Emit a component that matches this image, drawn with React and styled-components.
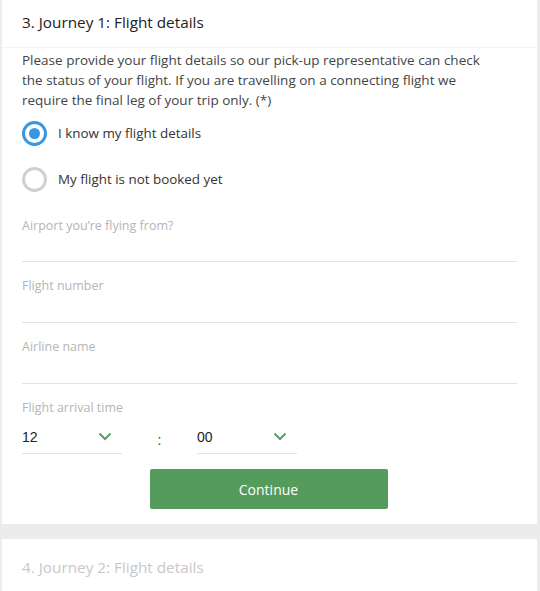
import React from 'react'
import styled, { createGlobalStyle } from 'styled-components'

const GlobalStyle = createGlobalStyle`
  html, body {
    margin: 0;
    padding: 0;
    background: #ececec;
    font-family: "Open Sans", "Liberation Sans", sans-serif;
  }
`

const Page = styled.div`
  display: flex;
  flex-direction: column;
  gap: 15px;
  padding: 0 3px 0 2px;
`

const Card = styled.section`
  background: #fff;
`

const CardHeader = styled.div`
  height: ${props => props.open ? '48px' : '53px'};
  box-sizing: border-box;
  padding: ${props => props.open ? '0 20px 3px' : '3px 20px 0'};
  display: flex;
  align-items: center;
  border-bottom: ${props => props.open ? '1px solid #f3f3f3' : 'none'};
  font-size: 15.3px;
  color: ${props => props.open ? '#222' : '#c8c8c8'};
`

const CardBody = styled.div`
  padding: 2px 20px 15px;
  display: flex;
  flex-direction: column;
`

const Intro = styled.p`
  margin: 0;
  padding-right: 22px;
  font-size: 13.5px;
  line-height: 20px;
  color: #444;
`

const RadioRow = styled.label`
  display: flex;
  align-items: center;
  gap: 11px;
  height: 46px;
  font-size: 13.4px;
  color: #333;
`

const RadioCircle = styled.span`
  width: 25px;
  height: 25px;
  box-sizing: border-box;
  border-radius: 50%;
  border: 3px solid ${props => props.checked ? '#3a96de' : '#d0d0d0'};
  display: flex;
  align-items: center;
  justify-content: center;

  &::after {
    content: '';
    width: 11px;
    height: 11px;
    border-radius: 50%;
    background: ${props => props.checked ? '#3a96de' : 'transparent'};
  }
`

const Radios = styled.div`
  display: flex;
  flex-direction: column;
`

const Field = styled.div`
  height: ${props => props.first ? '60px' : '61px'};
  border-bottom: 1px solid #e2e2e2;
  display: flex;
  align-items: flex-start;
  padding-top: 15px;
  box-sizing: border-box;
  font-size: 12.5px;
  color: #b5b5b5;
`

const TimeLabel = styled.div`
  font-size: 12.5px;
  color: #b5b5b5;
  margin-top: 15px;
`

const TimeRow = styled.div`
  display: flex;
  align-items: center;
  margin-top: 6px;
`

const Select = styled.div`
  width: 100px;
  height: 32px;
  box-sizing: border-box;
  border-bottom: 1px solid #e2e2e2;
  display: flex;
  align-items: center;
  justify-content: space-between;
  padding: 0 10px 2px 0;
  font-family: "Liberation Sans", Arial, sans-serif;
  font-size: 14px;
  color: #222;
`

const Colon = styled.span`
  width: 75px;
  text-align: center;
  font-family: "Liberation Sans", Arial, sans-serif;
  font-size: 14px;
  color: #333;
  padding-top: 4px;
`

const Button = styled.button`
  align-self: center;
  margin: 15px 0 0 -2px;
  width: 238px;
  height: 40px;
  border: none;
  border-radius: 2px;
  background: #559b5b;
  color: #fff;
  font-family: "Open Sans", "Liberation Sans", sans-serif;
  font-size: 14px;
`

const Chevron = () => (
  <svg width="14" height="9" viewBox="0 0 14 9">
    <path d="M1.5 1.5 L7 7 L12.5 1.5" fill="none" stroke="#5a9e62" strokeWidth="2" />
  </svg>
)

export default function App () {
  return (
    <>
      <GlobalStyle />
      <Page>
        <Card>
          <CardHeader open>3. Journey 1: Flight details</CardHeader>
          <CardBody>
            <Intro>
              Please provide your flight details so our pick-up representative can check the status of your flight. If you are travelling on a connecting flight we require the final leg of your trip only. (*)
            </Intro>
            <Radios>
              <RadioRow><RadioCircle checked />I know my flight details</RadioRow>
              <RadioRow><RadioCircle />My flight is not booked yet</RadioRow>
            </Radios>
            <Field first>Airport you’re flying from?</Field>
            <Field>Flight number</Field>
            <Field>Airline name</Field>
            <TimeLabel>Flight arrival time</TimeLabel>
            <TimeRow>
              <Select>12<Chevron /></Select>
              <Colon>:</Colon>
              <Select>00<Chevron /></Select>
            </TimeRow>
            <Button>Continue</Button>
          </CardBody>
        </Card>
        <Card>
          <CardHeader>4. Journey 2: Flight details</CardHeader>
        </Card>
      </Page>
    </>
  )
}
